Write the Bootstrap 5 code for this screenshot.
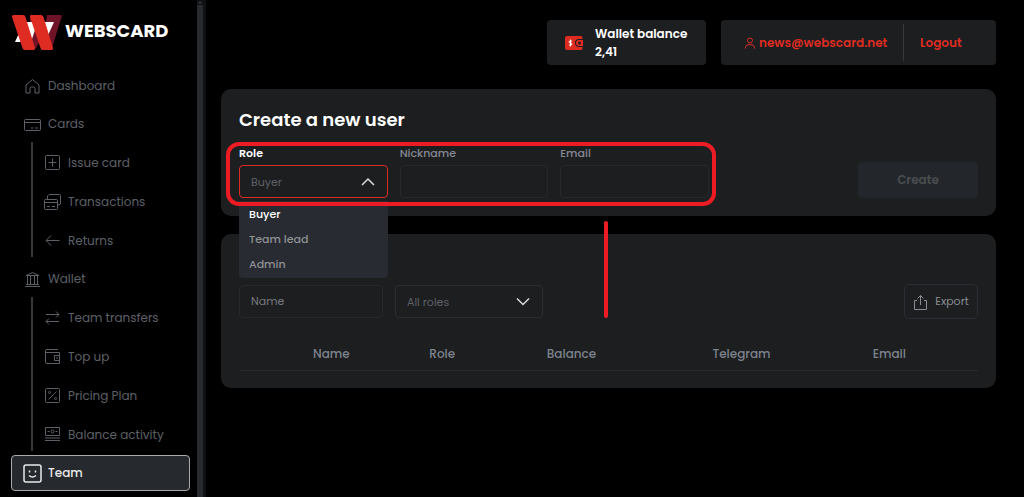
<!DOCTYPE html>
<html lang="en">
<head>
<meta charset="utf-8">
<meta name="viewport" content="width=device-width, initial-scale=1">
<title>Webscard – Team</title>
<link href="https://cdn.jsdelivr.net/npm/bootstrap@5.3.0/dist/css/bootstrap.min.css" rel="stylesheet">
<style>
  :root { --panel: #1d1e20; --muted: #5d6067; --label: #858993; --accent: #de2c22; --note: #ed1c24; }
  body { background: #000; color: #fff; font-family: Poppins, Inter, sans-serif; font-size: 12px; line-height: 18px; }
  svg { display: block; flex: none; }
  .line-icon { fill: none; stroke: currentColor; }

  /* sidebar */
  .side { flex: 0 0 197px; padding: 14px 7px 6px 11px; }
  .brand { height: 52px; font-size: 18px; font-weight: 700; color: #fff; gap: 3px; }
  .side-link { height: 39px; padding-left: 13px; gap: 7px; color: var(--muted); text-decoration: none; }
  .side-link:hover { color: #fff; }
  .side-link svg { width: 17px; height: 17px; }
  .side-head { height: 38px; }
  .side-sub { margin-left: 20px; position: relative; }
  .side-sub::before { content: ""; position: absolute; left: 0; top: -1px; bottom: 3px; width: 2px; background: #37383b; }
  .side-link.current { height: 36px; padding-left: 11px; gap: 6px; margin-top: 1px; color: #e9e9ea; background: #26292d; border: 1px solid #a9abad; border-radius: 4px; font-weight: 500; }
  .side-link.current svg { width: 19px; height: 19px; }
  .rail { flex: 0 0 9px; background: #101113; padding-right: 3px; }
  .rail-arrow { height: 5px; color: #3a3c40; }
  .rail-thumb { background: #272a2f; }

  /* main */
  .page-main { padding: 20px 28px 20px 15px; min-width: 0; }
  .tile { background: var(--panel); border-radius: 4px; min-height: 45px; font-weight: 600; }
  .tile-wallet { width: 159px; padding-left: 18px; gap: 12px; }
  .tile-user { width: 275px; }
  .tile-user a { color: var(--accent); text-decoration: none; }
  .tile-user .logout { border-left: 1px solid #37393c; height: 37px; padding-left: 16px; width: 93px; }
  .panel { background: var(--panel); border-radius: 10px; padding: 18px; }
  .panel-create { padding-top: 19px; }
  .panel-team { margin-top: 18px; padding-bottom: 17px; }
  h1 { font-size: 18px; line-height: 24px; font-weight: 600; margin-bottom: 14px; }
  .field-set { flex: 0 1 470px; display: grid; grid-template-columns: repeat(3, minmax(0, 1fr)); gap: 12px; }
  .field-set label { font-size: 11px; line-height: 14px; font-weight: 500; color: var(--label); margin-bottom: 5px; display: block; }
  .field-set label.active { color: #fff; font-weight: 600; }
  .ctl { height: 33px; font-size: 11px; color: var(--muted); background: transparent; border: 1px solid #26282b; border-radius: 4px; padding: 0 11px; width: 100%; appearance: none; }
  .ctl::placeholder { color: #77797e; opacity: 1; }
  .ctl:focus { outline: 1px solid var(--accent); }
  .pick { position: relative; }
  .pick .ctl { border-color: #2a2d33; }
  .pick.open .ctl { border-color: var(--accent); }
  .pick svg { position: absolute; right: 13px; top: 12px; width: 14px; height: 9px; color: #d9dadb; pointer-events: none; }
  .choices { position: absolute; left: 0; right: 0; top: 36px; z-index: 2; background: #282b31; border-radius: 0 0 4px 4px; padding: 1px 0; font-size: 11px; font-weight: 500; color: #8f9195; }
  .choices li { height: 25px; padding-left: 10px; line-height: 25px; }
  .choices .chosen { color: #fff; }
  .note-box { position: absolute; z-index: 3; inset: -4px -7px -8px -13px; border: 4px solid var(--note); border-radius: 13px; pointer-events: none; }
  .note-line { position: absolute; z-index: 3; left: 365px; top: 75px; width: 4px; height: 97px; border-radius: 2px; background: var(--note); }
  .btn-create { width: 120px; height: 36px; padding: 0; border: 0; border-radius: 4px; font-size: 12px; font-weight: 600; }
  .btn-create:disabled { background: #23272c; color: #4a4d50; opacity: 1; }
  .btn-export { width: 74px; height: 35px; padding: 0; border: 1px solid #2a2d35; border-radius: 5px; color: #8a8d93; font-size: 11px; gap: 7px; }
  .filters { padding-top: 32px; gap: 12px; }
  .w-name { width: 144px; }
  .w-role { width: 148px; }
  .team-table { margin: 19px 0 0; table-layout: fixed; font-size: 12px; text-align: center; --bs-table-bg: transparent; --bs-table-color: #7c838d; }
  .team-table th { padding: 7px 0; font-weight: 500; border-bottom: 1px solid #27292b; color: #7c838d; }
</style>
</head>
<body>
<div class="d-flex min-vh-100">
  <nav class="side d-flex flex-column" aria-label="Main">
    <a class="brand d-flex align-items-start text-decoration-none" href="#">
      <svg width="51" height="37" viewBox="0 0 51 37">
        <path fill="#6f1428" d="M36 1h14q1 0 .7 1.500L41 34q-1 2-3 2h-8z"/>
        <path fill="#6f1428" d="M19 1h11l-5 20-5 15h-2z"/>
        <path fill="#fff" d="M13 8h30l-9 20H4z"/>
        <path fill="#6f1428" d="M20 28l5-15 4 14-4 7-5 2z"/>
        <path fill="#de2c22" d="M3 1h9q2 0 2.500 2L24 34q.5 2-1.500 2H14q-2 0-2.500-2L1 3Q.5 1 3 1z"/>
        <path fill="#de2c22" d="M21 1h9q2 0 2.500 2L42 34q.5 2-1.500 2H32q-2 0-2.500-2L19 3q-.5-2 2-2z"/>
      </svg>
      <span class="pt-2">WEBSCARD</span>
    </a>
    <a class="side-link d-flex align-items-center" href="#"><svg class="line-icon" viewBox="0 0 17 17"><path d="M2 8 8.500 2.500 15 8V16h-4V11.500q0-1.500-1.500-1.500h-2Q6 10 6 11.500V16H2z"/></svg>Dashboard</a>
    <a class="side-link side-head d-flex align-items-center" href="#"><svg class="line-icon" viewBox="0 0 17 17"><rect x=".5" y="3.500" width="16" height="11" rx="1"/><path d="M.5 6.500h16M7 12h2.500M11 12h3"/></svg>Cards</a>
    <div class="side-sub">
      <a class="side-link d-flex align-items-center" href="#"><svg class="line-icon" viewBox="0 0 17 17"><rect x="1.500" y="1.500" width="14" height="14" rx="1"/><path d="M8.500 4.500v8M4.500 8.500h8"/></svg>Issue card</a>
      <a class="side-link d-flex align-items-center" href="#"><svg class="line-icon" viewBox="0 0 17 17"><rect x=".5" y="6.500" width="13" height="10" rx="1"/><path d="M.5 9.500h13M3 13.500h3M8 13.500h3M3.500 6V3L5 1.500h10.500q1 0 1 1V11l-3 1.500"/></svg>Transactions</a>
      <a class="side-link d-flex align-items-center" href="#"><svg class="line-icon" viewBox="0 0 17 17"><path d="M15.500 8.500h-13M7 3.500l-5 5 5 5"/></svg>Returns</a>
    </div>
    <a class="side-link side-head d-flex align-items-center" href="#"><svg class="line-icon" viewBox="0 0 17 17"><path d="M2 4.500 8.500 1.500 15 4.500zM1 15.500h15M2 13.500h13M3.500 5v8M6.500 5v8M10.500 5v8M13.500 5v8"/></svg>Wallet</a>
    <div class="side-sub">
      <a class="side-link d-flex align-items-center" href="#"><svg class="line-icon" viewBox="0 0 17 17"><path d="M2 5.500h13M12 2.500l3 3-3 3M15 12.500H2M5 9.500l-3 3 3 3"/></svg>Team transfers</a>
      <a class="side-link d-flex align-items-center" href="#"><svg class="line-icon" viewBox="0 0 17 17"><path d="M14 1.500H3q-1.500 0-1.500 1.500v11q0 1.500 1.500 1.500h12.500v-11H2M15.500 7.500H10.500v5h5zM12 10h2"/></svg>Top up</a>
      <a class="side-link d-flex align-items-center" href="#"><svg class="line-icon" viewBox="0 0 17 17"><rect x="1.500" y="1.500" width="14" height="14" rx="1"/><path d="M12.500 4.500l-8 8"/><circle cx="5.500" cy="5.500" r="1"/><circle cx="11.500" cy="11.500" r="1"/></svg>Pricing Plan</a>
      <a class="side-link d-flex align-items-center" href="#"><svg class="line-icon" viewBox="0 0 17 17"><path d="M1.500 1.500h14v8h-14zM1 12h15M1 14.500h15M3.500 5.500h2M11.500 5.500h2"/><circle cx="8.500" cy="5.500" r="1.500"/></svg>Balance activity</a>
    </div>
    <a class="side-link current d-flex align-items-center" href="#" aria-current="page"><svg class="line-icon" viewBox="0 0 19 19" stroke-width="1.500"><rect x="1" y="1" width="17" height="17" rx="2"/><path d="M6.500 6.500v2M12.500 6.500v2M6 11.500q3.500 3 7 0"/></svg>Team</a>
  </nav>
  <div class="rail d-flex flex-column" aria-hidden="true">
    <svg class="rail-arrow" viewBox="0 0 6 5"><path fill="currentColor" d="M3 1l2 2.500H1z"/></svg>
    <div class="rail-thumb flex-grow-1"></div>
  </div>

  <main class="page-main flex-grow-1">
    <header class="d-flex justify-content-end mb-4" style="gap: 15px">
      <div class="tile tile-wallet d-flex align-items-center">
        <svg width="18" height="16" viewBox="0 0 18 16"><path fill="#de2c22" d="M2 1h14q1.500 0 1.500 2v1H14q-4 0-4 4t4 4h3.500v1q0 2-1.500 2H2q-2 0-2-2V3q0-2 2-2z"/><path fill="#de2c22" d="M14 5h4v6h-4q-3 0-3-3t3-3z"/><circle cx="14.500" cy="8" r="1.500" fill="#1d1e20"/><path d="M7 6H5.500Q4 6 4 7t1.500 1T7 9t-1.500 1H4M5.500 4.500v7" stroke="#fff" fill="none"/></svg>
        <div>Wallet balance<br>2,41</div>
      </div>
      <div class="tile tile-user d-flex align-items-center justify-content-between">
        <a class="d-flex align-items-center gap-1 ps-4" href="#"><svg class="line-icon" width="10" height="12" viewBox="0 0 10 12"><circle cx="5" cy="3.500" r="2.500"/><path d="M.5 11.500V10Q1 7.500 5 7.500t4.500 2.500v1.500"/></svg>news@webscard.net</a>
        <a class="logout d-flex align-items-center" href="#">Logout</a>
      </div>
    </header>

    <section class="panel panel-create">
      <h1>Create a new user</h1>
      <form class="d-flex justify-content-between align-items-end">
        <div class="field-set position-relative">
          <div>
            <label class="active" for="role">Role</label>
            <div class="pick open">
              <select class="ctl" id="role"><option>Buyer</option><option>Team lead</option><option>Admin</option></select>
              <svg class="line-icon" viewBox="0 0 14 9" stroke-width="1.500"><path d="M1 8l6-6 6 6"/></svg>
              <ul class="choices list-unstyled mb-0">
                <li class="chosen">Buyer</li><li>Team lead</li><li>Admin</li>
              </ul>
            </div>
          </div>
          <div><label for="nick">Nickname</label><input class="ctl" id="nick" type="text"></div>
          <div><label for="mail">Email</label><input class="ctl" id="mail" type="email"></div>
          <span class="note-box"></span><span class="note-line"></span>
        </div>
        <button class="btn btn-create" type="submit" disabled>Create</button>
      </form>
    </section>

    <section class="panel panel-team">
      <div class="filters d-flex align-items-center">
        <input class="ctl w-name" type="text" placeholder="Name" aria-label="Name">
        <div class="pick w-role">
          <select class="ctl" aria-label="Roles"><option>All roles</option><option>Buyer</option><option>Team lead</option><option>Admin</option></select>
          <svg class="line-icon" viewBox="0 0 14 9" stroke-width="1.500"><path d="M1 1.500l6 6 6-6"/></svg>
        </div>
        <button class="btn btn-export ms-auto d-flex align-items-center justify-content-center" type="button"><svg class="line-icon" width="15" height="16" viewBox="0 0 15 16"><path d="M4 6.500H1.500v9h12v-9H11M7.500 11V1.500M4.500 4.500l3-3 3 3"/></svg>Export</button>
      </div>
      <table class="table team-table">
        <colgroup><col style="width:5%"><col style="width:15%"><col style="width:15%"><col style="width:20%"><col style="width:26%"><col style="width:14%"><col style="width:5%"></colgroup>
        <thead><tr><th></th><th>Name</th><th>Role</th><th>Balance</th><th>Telegram</th><th>Email</th><th></th></tr></thead>
      </table>
    </section>
  </main>
</div>
<script src="https://cdn.jsdelivr.net/npm/bootstrap@5.3.0/dist/js/bootstrap.bundle.min.js"></script>
</body>
</html>
